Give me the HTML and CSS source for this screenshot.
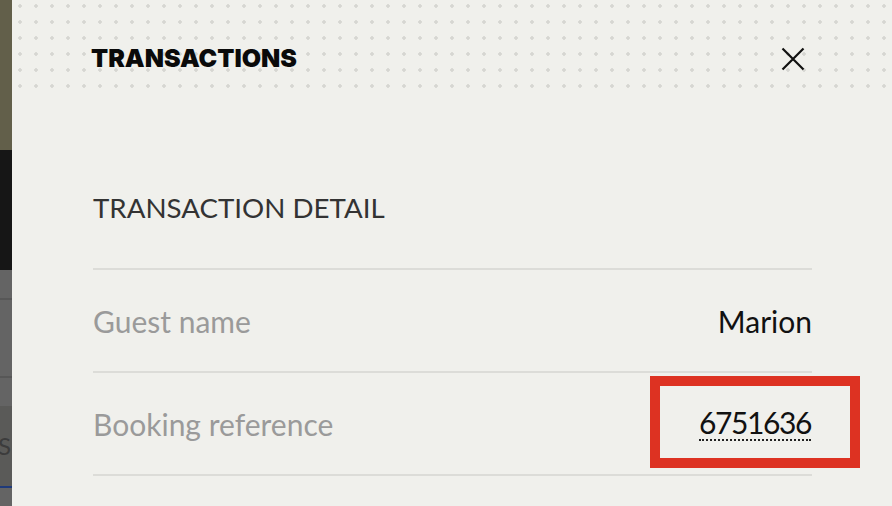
FILE: index.html
```html
<!DOCTYPE html>
<html lang="en">
<head>
<meta charset="utf-8">
<title>Transactions</title>
<link rel="stylesheet" href="styles.css">
</head>
<body>
<div class="page">
  <div class="backdrop">
    <div class="bd-olive"></div>
    <div class="bd-black"></div>
    <div class="bd-grey bd-row1"></div>
    <div class="bd-grey bd-row2"></div>
    <div class="bd-grey bd-row3"></div>
    <div class="bd-dark"><span class="bd-letter">S</span></div>
    <div class="bd-grey bd-rest"></div>
  </div>
  <aside class="panel">
    <header class="panel-header">
      <h1 class="panel-title">TRANSACTIONS</h1>
      <button class="close-btn" aria-label="Close">
        <svg width="24" height="24" viewBox="0 0 24 24" aria-hidden="true">
          <path d="M1.5 1.5 L22.5 22.5 M22.5 1.5 L1.5 22.5" stroke="#111" stroke-width="2.2" fill="none"/>
        </svg>
      </button>
    </header>
    <section class="detail">
      <h2 class="detail-title">TRANSACTION DETAIL</h2>
      <div class="detail-row">
        <span class="label">Guest name</span>
        <span class="value">Marion</span>
      </div>
      <div class="detail-row">
        <span class="label">Booking reference</span>
        <span class="value ref">6751636</span>
      </div>
    </section>
    <div class="highlight"></div>
  </aside>
</div>
</body>
</html>
```

FILE: styles.css
```css
html, body {
  margin: 0;
  padding: 0;
  height: 100%;
}

body {
  background: #f0f0ec;
  font-family: Lato, "Noto Sans", sans-serif;
  overflow: hidden;
}

.page {
  display: flex;
  height: 506px;
}

.backdrop {
  width: 12px;
  flex: none;
  display: flex;
  flex-direction: column;
}

.bd-olive { height: 150px; background: #625f4a; }
.bd-black { height: 120px; background: #161616; }
.bd-grey { background: #646464; }
.bd-row1 { height: 28px; border-bottom: 2px solid #575757; }
.bd-row2 { height: 76px; border-bottom: 2px solid #575757; }
.bd-row3 { height: 28px; }
.bd-dark {
  height: 80px;
  background: #5a5a58;
  border-bottom: 2px solid #1f3a7a;
  overflow: hidden;
  display: flex;
  align-items: center;
}
.bd-letter {
  font-family: Lato, sans-serif;
  font-size: 24px;
  line-height: 24px;
  color: #3c3c3c;
  margin-left: -2px;
}
.bd-rest { flex: 1; }

.panel {
  flex: 1;
  position: relative;
  background: #f0f0ec;
}

.panel-header {
  height: 92px;
  box-sizing: border-box;
  padding: 0 87px 0 79px;
  display: flex;
  justify-content: space-between;
  align-items: flex-start;
  background-image: radial-gradient(circle, #d6d6d2 1.5px, transparent 2px);
  background-size: 16px 16px;
  background-position: 0 -2px;
}

.panel-title {
  margin: 43px 0 0;
  font-family: Inter, sans-serif;
  font-weight: 900;
  font-size: 25px;
  line-height: 30px;
  color: #0a0a0a;
}

.close-btn {
  margin-top: 47px;
  padding: 0;
  border: 0;
  background: none;
  width: 24px;
  height: 24px;
  display: block;
  cursor: pointer;
}
.close-btn svg { display: block; }

.detail {
  padding: 0 80px 0 81px;
}

.detail-title {
  margin: 0;
  padding: 98px 0 42px;
  font-weight: 400;
  font-size: 27.7px;
  line-height: 36px;
  color: #333;
  border-bottom: 2px solid #dcdcd8;
}

.detail-row {
  height: 101px;
  display: flex;
  justify-content: space-between;
  align-items: center;
  border-bottom: 2px solid #dcdcd8;
  font-size: 30px;
}

.label { color: #9a9a9a; }
.value { color: #111; }

.ref {
  line-height: 1.1;
  letter-spacing: -1.4px;
  margin-right: 1px;
  border-bottom: 2px dotted #222;
}

.highlight {
  position: absolute;
  left: 638px;
  top: 376px;
  width: 190px;
  height: 72px;
  border: 10px solid #dd3222;
}
```
